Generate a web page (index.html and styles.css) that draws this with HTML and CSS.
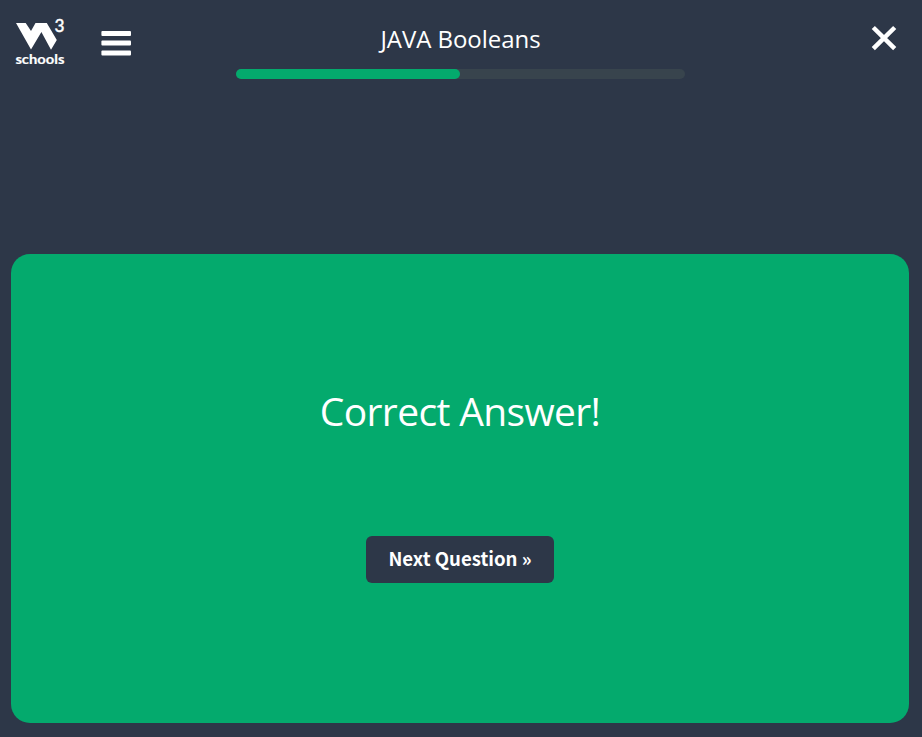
FILE: index.html
```html
<!DOCTYPE html>
<html lang="en">
<head>
<meta charset="utf-8">
<title>JAVA Booleans</title>
<link rel="stylesheet" href="styles.css">
</head>
<body>
<header class="topbar">
  <div class="left">
    <a class="logo" aria-label="schools home">
      <svg width="56" height="52" viewBox="12 16 56 52">
        <path d="M16 23H25.7L31 31L35.5 23H46.8L56.8 40L51 49.7L41.4 32L31 49.5Z" fill="#fff"/>
        <text class="logo-three" x="54.6" y="32" textLength="10" lengthAdjust="spacingAndGlyphs">3</text>
        <text class="logo-name" x="15.4" y="64" textLength="49" lengthAdjust="spacingAndGlyphs">schools</text>
      </svg>
    </a>
    <svg class="menu" width="30" height="26" viewBox="0 0 30 26"><g fill="#fff"><rect x="0.4" y="0" width="29.6" height="5" rx="1"/><rect x="0.4" y="9.6" width="29.6" height="5" rx="1"/><rect x="0.4" y="19.4" width="29.6" height="5" rx="1"/></g></svg>
  </div>
  <div class="center">
    <h1 class="title">JAVA Booleans</h1>
    <div class="progress"><div class="bar"></div></div>
  </div>
  <div class="right">
    <svg width="26" height="26" viewBox="0 0 26 26"><path d="M2.3 2.5L23.7 23.7M23.7 2.5L2.3 23.7" stroke="#fff" stroke-width="4.5"/></svg>
  </div>
</header>
<main class="card">
  <h2 class="result">Correct Answer!</h2>
  <button class="next">Next Question »</button>
</main>
</body>
</html>
```
FILE: styles.css
```css
* { box-sizing: border-box; }
body {
  margin: 0;
  height: 737px;
  overflow: hidden;
  background: #2d3748;
  color: #fff;
  font-family: "Open Sans", "Noto Sans", sans-serif;
}
.topbar {
  display: grid;
  grid-template-columns: 236px 449px 1fr;
  height: 254px;
}
.left { display: flex; align-items: flex-start; padding: 16px 0 0 12px; }
.logo { display: block; height: 52px; }
.logo svg { display: block; overflow: visible; }
.logo-three { font: 500 17.5px "Lato", sans-serif; fill: #fff; stroke: #fff; stroke-width: 0.4px; }
.logo-name { font: 700 13.5px "Lato", sans-serif; fill: #fff; stroke: #fff; stroke-width: 0.2px; }
.menu { margin: 15px 0 0 33px; }
.title {
  margin: 0;
  padding-top: 20px;
  height: 69px;
  font-size: 24px;
  line-height: 38px;
  font-weight: 400;
  letter-spacing: -0.05px;
  text-align: center;
  white-space: nowrap;
}
.progress { height: 10px; border-radius: 5px; background: #38444d; }
.bar { width: 224px; height: 10px; border-radius: 5px; background: #04aa6d; }
.right { padding: 25px 0 0 186px; }
.card {
  display: flex;
  flex-direction: column;
  align-items: center;
  width: 898px;
  height: 469px;
  margin-left: 11px;
  padding-top: 127px;
  border-radius: 19px;
  background: #04aa6d;
}
.result {
  margin: 0;
  height: 155px;
  font-size: 39px;
  line-height: 60px;
  font-weight: 400;
  letter-spacing: -0.65px;
  white-space: nowrap;
}
.next {
  width: 188px;
  height: 47px;
  padding: 0 0 4px;
  border: 0;
  border-radius: 6px;
  background: #2d3748;
  color: #fff;
  font: 700 18.6px/43px "Noto Sans CJK SC", sans-serif;
  white-space: nowrap;
}
```
